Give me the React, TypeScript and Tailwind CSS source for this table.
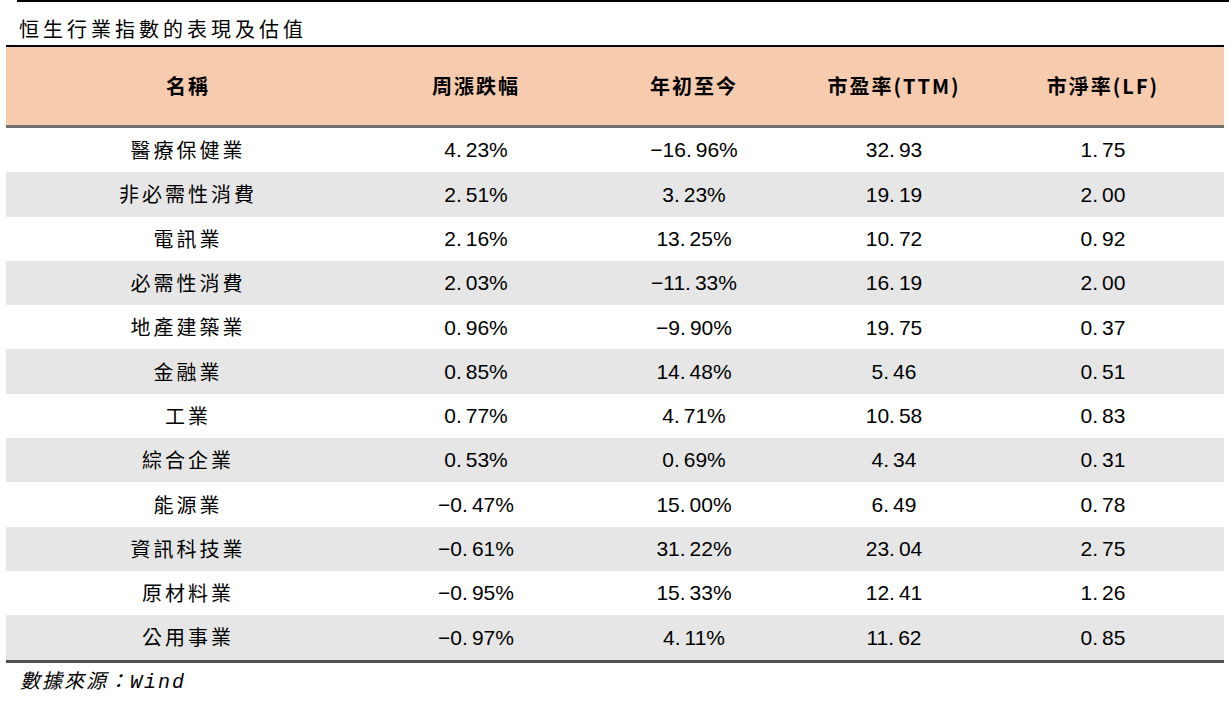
import React from 'react';

const rows: [string, string, string, string, string][] = [
  ['醫療保健業', '4.23%', '−16.96%', '32.93', '1.75'],
  ['非必需性消費', '2.51%', '3.23%', '19.19', '2.00'],
  ['電訊業', '2.16%', '13.25%', '10.72', '0.92'],
  ['必需性消費', '2.03%', '−11.33%', '16.19', '2.00'],
  ['地產建築業', '0.96%', '−9.90%', '19.75', '0.37'],
  ['金融業', '0.85%', '14.48%', '5.46', '0.51'],
  ['工業', '0.77%', '4.71%', '10.58', '0.83'],
  ['綜合企業', '0.53%', '0.69%', '4.34', '0.31'],
  ['能源業', '−0.47%', '15.00%', '6.49', '0.78'],
  ['資訊科技業', '−0.61%', '31.22%', '23.04', '2.75'],
  ['原材料業', '−0.95%', '15.33%', '12.41', '1.26'],
  ['公用事業', '−0.97%', '4.11%', '11.62', '0.85'],
];

const cols = ['w-[364px]', 'w-[212px]', 'w-[224px]', 'w-[176px]', 'flex-1'];
const headers = ['名稱', '周漲跌幅', '年初至今', '市盈率(TTM)', '市淨率(LF)'];

const cjk = { fontFamily: '"Noto Sans CJK TC", sans-serif' };
const num = { fontFamily: '"Liberation Sans", Arial, sans-serif' };

// 小數點後留一點空，像原圖的全形點
function Num({ v }: { v: string }) {
  const [a, b] = v.split('.');
  return (
    <span>
      {a}.<span className="ml-[4px]">{b}</span>
    </span>
  );
}

export default function App() {
  return (
    <div className="w-[1229px] h-[707px] bg-white text-black">
      <div className="ml-[17px] border-t-2 border-black" />
      <div className="pl-[19px] pt-[15px] h-[43px] text-[20px] leading-[24px] tracking-[4px]" style={cjk}>
        恒生行業指數的表現及估值
      </div>
      <div className="ml-[6px] w-[1218px]">
        <div className="border-t-2 border-black" />
        <div className="flex h-[81px] items-center bg-[#f7cbad] border-b-[3px] border-[#707070]">
          {headers.map((h, i) => (
            <div
              key={h}
              className={`${cols[i]} text-center text-[20px] font-bold tracking-[2px]`}
              style={{ fontFamily: '"Noto Sans CJK SC", sans-serif' }}
            >
              {h}
            </div>
          ))}
        </div>
        {rows.map((r, idx) => (
          <div
            key={r[0]}
            className={`flex h-[44.3px] items-center text-[20px] ${idx % 2 === 1 ? 'bg-[#e6e6e6]' : 'bg-white'}`}
          >
            <div className={`${cols[0]} text-center tracking-[3px]`} style={cjk}>{r[0]}</div>
            {r.slice(1).map((v, j) => (
              <div key={j} className={`${cols[j + 1]} text-center text-[21px]`} style={num}>
                <Num v={v} />
              </div>
            ))}
          </div>
        ))}
        <div className="border-t-[3px] border-[#505050]" />
      </div>
      <div className="pl-[20px] pt-[2px] text-[20px] italic tracking-[2px]" style={cjk}>
        數據來源：<span style={{ fontFamily: '"Liberation Mono", monospace' }}>Wind</span>
      </div>
    </div>
  );
}
